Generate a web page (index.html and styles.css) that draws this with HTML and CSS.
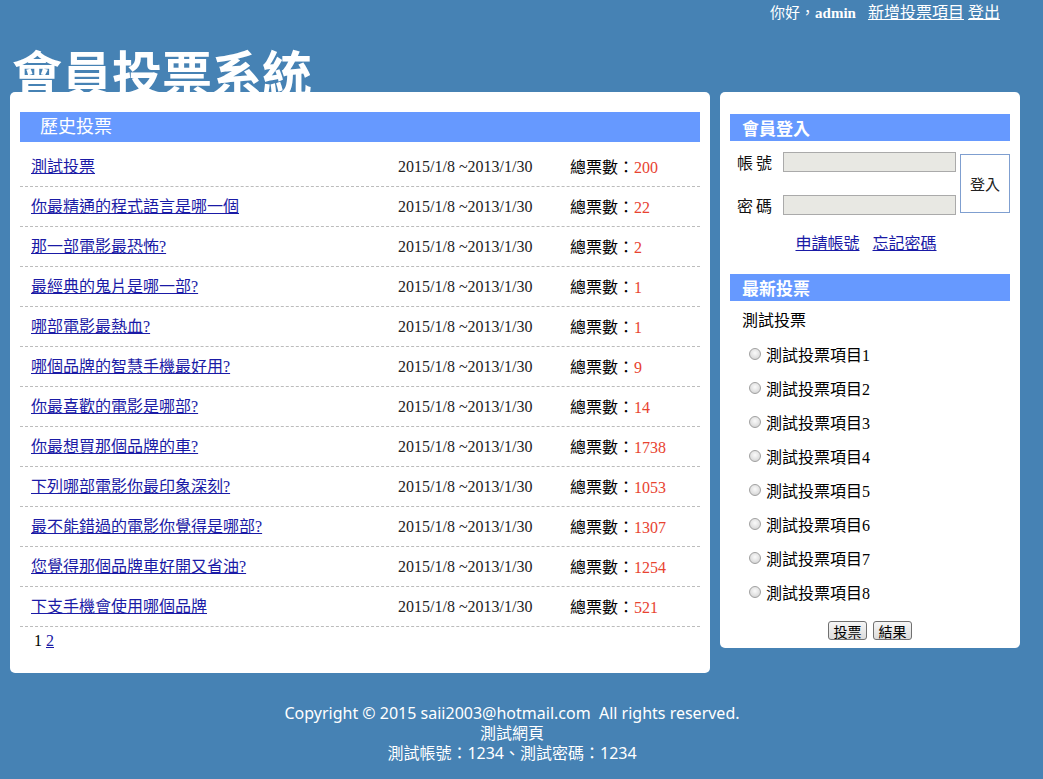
FILE: index.html
```html
<!DOCTYPE html>
<html lang="zh-Hant">
<head>
<meta charset="utf-8">
<title>會員投票系統</title>
<link rel="stylesheet" href="styles.css">
</head>
<body>
<div class="page">
  <div class="topbar">
    <span class="hello">你好，</span><b class="user">admin</b>
    <a href="#" class="toplink">新增投票項目</a> <a href="#" class="toplink">登出</a>
  </div>
  <div class="header"><h1 class="title">會員投票系統</h1></div>
  <div class="main">
    <div class="panel left">
      <div class="bar bar-serif">歷史投票</div>
      <div class="list">
        <div class="row"><a href="#" class="vlink">測試投票</a><span class="date">2015/1/8 ~2013/1/30</span><span class="count">總票數：<em>200</em></span></div>
        <div class="row"><a href="#" class="vlink">你最精通的程式語言是哪一個</a><span class="date">2015/1/8 ~2013/1/30</span><span class="count">總票數：<em>22</em></span></div>
        <div class="row"><a href="#" class="vlink">那一部電影最恐怖?</a><span class="date">2015/1/8 ~2013/1/30</span><span class="count">總票數：<em>2</em></span></div>
        <div class="row"><a href="#" class="vlink">最經典的鬼片是哪一部?</a><span class="date">2015/1/8 ~2013/1/30</span><span class="count">總票數：<em>1</em></span></div>
        <div class="row"><a href="#" class="vlink">哪部電影最熱血?</a><span class="date">2015/1/8 ~2013/1/30</span><span class="count">總票數：<em>1</em></span></div>
        <div class="row"><a href="#" class="vlink">哪個品牌的智慧手機最好用?</a><span class="date">2015/1/8 ~2013/1/30</span><span class="count">總票數：<em>9</em></span></div>
        <div class="row"><a href="#" class="vlink">你最喜歡的電影是哪部?</a><span class="date">2015/1/8 ~2013/1/30</span><span class="count">總票數：<em>14</em></span></div>
        <div class="row"><a href="#" class="vlink">你最想買那個品牌的車?</a><span class="date">2015/1/8 ~2013/1/30</span><span class="count">總票數：<em>1738</em></span></div>
        <div class="row"><a href="#" class="vlink">下列哪部電影你最印象深刻?</a><span class="date">2015/1/8 ~2013/1/30</span><span class="count">總票數：<em>1053</em></span></div>
        <div class="row"><a href="#" class="vlink">最不能錯過的電影你覺得是哪部?</a><span class="date">2015/1/8 ~2013/1/30</span><span class="count">總票數：<em>1307</em></span></div>
        <div class="row"><a href="#" class="vlink">您覺得那個品牌車好開又省油?</a><span class="date">2015/1/8 ~2013/1/30</span><span class="count">總票數：<em>1254</em></span></div>
        <div class="row"><a href="#" class="vlink">下支手機會使用哪個品牌</a><span class="date">2015/1/8 ~2013/1/30</span><span class="count">總票數：<em>521</em></span></div>
      </div>
      <div class="pager">1 <a href="#" class="vlink">2</a></div>
    </div>
    <div class="panel right">
      <div class="bar bar-sans">會員登入</div>
      <div class="login">
        <div class="fields">
          <label class="field"><span class="lbl">帳號</span><input class="inp" type="text"></label>
          <label class="field"><span class="lbl">密碼</span><input class="inp" type="password"></label>
        </div>
        <button class="loginbtn" type="button">登入</button>
      </div>
      <div class="loginlinks"><a href="#" class="vlink">申請帳號</a><a href="#" class="vlink">忘記密碼</a></div>
      <div class="bar bar-sans bar-new">最新投票</div>
      <div class="poll-title">測試投票</div>
      <div class="options">
        <label class="opt"><input type="radio" name="v" class="radio"><span>測試投票項目1</span></label>
        <label class="opt"><input type="radio" name="v" class="radio"><span>測試投票項目2</span></label>
        <label class="opt"><input type="radio" name="v" class="radio"><span>測試投票項目3</span></label>
        <label class="opt"><input type="radio" name="v" class="radio"><span>測試投票項目4</span></label>
        <label class="opt"><input type="radio" name="v" class="radio"><span>測試投票項目5</span></label>
        <label class="opt"><input type="radio" name="v" class="radio"><span>測試投票項目6</span></label>
        <label class="opt"><input type="radio" name="v" class="radio"><span>測試投票項目7</span></label>
        <label class="opt"><input type="radio" name="v" class="radio"><span>測試投票項目8</span></label>
      </div>
      <div class="actions"><button class="btn" type="button">投票</button><button class="btn" type="button">結果</button></div>
    </div>
  </div>
  <div class="footer">
    <div>Copyright © 2015 saii2003@hotmail.com&nbsp; All rights reserved.</div>
    <div>測試網頁</div>
    <div>測試帳號：1234、測試密碼：1234</div>
  </div>
</div>
</body>
</html>
```
FILE: styles.css
```css
html, body {
  margin: 0;
  padding: 0;
  background: #4682b4;
}
body {
  font-family: "Liberation Serif", "Noto Sans CJK TC", serif;
  font-size: 16px;
  color: #000;
}
.page {
  width: 1024px;
}
.topbar {
  height: 20px;
  line-height: 22px;
  text-align: right;
  padding-right: 24px;
  color: #fff;
  font-size: 16px;
  white-space: nowrap;
}
.hello {
  font-family: "Noto Sans CJK TC", sans-serif;
  font-size: 15px;
}
.user {
  font-family: "Liberation Serif", serif;
  font-weight: bold;
  font-size: 15px;
  margin-right: 8px;
}
.toplink {
  color: #fff;
  font-family: "Noto Sans CJK TC", sans-serif;
  font-size: 16px;
}
.header {
  height: 72px;
  padding-left: 12px;
}
.title {
  margin: 0;
  padding-top: 26px;
  font-family: "Noto Sans CJK TC", sans-serif;
  font-size: 50px;
  line-height: 50px;
  font-weight: 700;
  color: #fff;
  white-space: nowrap;
}
.main {
  position: relative;
  display: flex;
  align-items: flex-start;
  gap: 10px;
  padding-left: 10px;
}
.panel {
  flex-shrink: 0;
  background: #fff;
  border-radius: 5px;
}
.left {
  width: 680px;
  padding: 20px 10px 22px;
}
.right {
  width: 280px;
  padding: 22px 10px 8px;
}
.bar {
  background: #6699ff;
  color: #fff;
}
.bar-serif {
  height: 30px;
  line-height: 30px;
  padding-left: 20px;
  font-size: 18px;
  font-family: "Liberation Serif", "Noto Sans CJK TC", serif;
}
.bar-sans {
  height: 27px;
  line-height: 27px;
  padding-left: 12px;
  font-size: 17px;
  font-weight: 700;
  font-family: "Noto Sans CJK TC", sans-serif;
}
.list {
  margin-top: 5px;
}
.row {
  display: grid;
  grid-template-columns: 367px 172px 1fr;
  height: 39px;
  align-items: center;
  padding-left: 11px;
  border-bottom: 1px dashed #bcbcbc;
  line-height: 20px;
}
.vlink {
  color: #1a1aa6;
  text-decoration: underline;
}
.date {
  color: #222;
}
.count {
  font-family: "Noto Sans CJK TC", sans-serif;
}
.count em {
  font-style: normal;
  font-family: "Liberation Serif", serif;
  color: #e8432f;
}
.pager {
  padding: 4px 0 0 14px;
  line-height: 20px;
}
.login {
  display: flex;
  margin-top: 11px;
}
.fields {
  display: flex;
  flex-direction: column;
  gap: 23px;
  width: 226px;
}
.field {
  display: flex;
  align-items: center;
  height: 20px;
}
.lbl {
  width: 46px;
  padding-left: 7px;
  box-sizing: border-box;
  font-family: "Noto Sans CJK TC", sans-serif;
  font-size: 16px;
  letter-spacing: 3px;
  color: #111;
}
.inp {
  width: 173px;
  height: 20px;
  box-sizing: border-box;
  border: 1px solid #aaa;
  background: #e8e8e3;
  margin: 0 0 0 7px;
  padding: 0;
}
.loginbtn {
  width: 50px;
  height: 59px;
  margin: 2px 0 0 4px;
  background: #fff;
  border: 1px solid #7f9fd0;
  font-family: "Noto Sans CJK TC", sans-serif;
  font-size: 15px;
  padding: 0;
  color: #222;
}
.loginlinks {
  display: flex;
  justify-content: center;
  gap: 13px;
  padding-right: 8px;
  margin-top: 17px;
  height: 20px;
  line-height: 20px;
  font-family: "Noto Sans CJK TC", sans-serif;
}
.bar-new {
  margin-top: 22px;
}
.poll-title {
  padding: 8px 0 0 12px;
  line-height: 20px;
  font-family: "Noto Sans CJK TC", sans-serif;
}
.options {
  display: flex;
  flex-direction: column;
  gap: 14px;
  margin-top: 15px;
  padding-left: 19px;
}
.opt {
  display: flex;
  align-items: center;
  height: 20px;
  font-family: "Liberation Serif", "Noto Sans CJK TC", serif;
}
.radio {
  appearance: none;
  -webkit-appearance: none;
  width: 12px;
  height: 12px;
  margin: 0 5px 0 0;
  border: 1px solid #a0a0a0;
  border-radius: 50%;
  background: radial-gradient(circle at 50% 40%, #fafafa 0, #e2e2e2 55%, #c8c8c8 100%);
  box-sizing: border-box;
}
.actions {
  display: flex;
  justify-content: center;
  gap: 6px;
  margin-top: 19px;
}
.btn {
  width: 39px;
  height: 19px;
  padding: 0;
  border: 1px solid #707070;
  border-radius: 3px;
  background: linear-gradient(#f6f6f6, #dcdcdc);
  font-family: "Noto Sans CJK TC", sans-serif;
  font-size: 14px;
  line-height: 16px;
  color: #000;
}
.footer {
  margin-top: 30px;
  text-align: center;
  color: #fff;
  font-family: "Noto Sans", "Noto Sans CJK TC", sans-serif;
  font-size: 16px;
  line-height: 20px;
}
```
